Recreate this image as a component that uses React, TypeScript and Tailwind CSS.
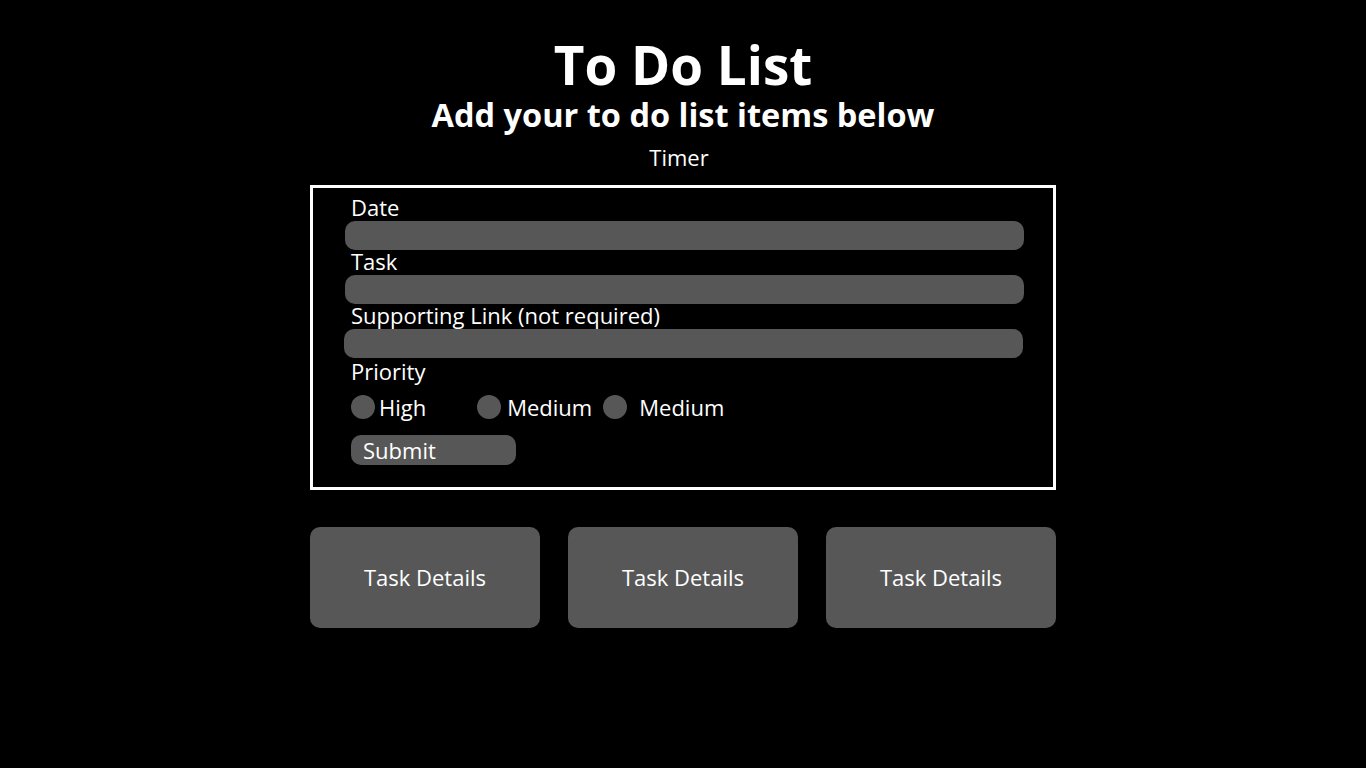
import React from 'react';

const font = { fontFamily: '"Open Sans", "Liberation Sans", sans-serif' };

function Field({ label, shift = false }: { label: string; shift?: boolean }) {
  return (
    <div className="flex flex-col">
      <label className="ml-[38px] h-[22px] text-[22px] leading-[22px] text-white">{label}</label>
      <div className={`${shift ? 'ml-[31px]' : 'ml-[32px]'} mt-[3px] h-[29px] w-[679px] rounded-[10px] bg-[#575757]`} />
    </div>
  );
}

function Radio({ label, gap }: { label: string; gap: string }) {
  return (
    <div className="flex items-center">
      <span className="h-[24px] w-[24px] rounded-full bg-[#575757]" />
      <span className={`${gap} text-[22px] leading-[24px] text-white`}>{label}</span>
    </div>
  );
}

export default function App() {
  return (
    <div className="min-h-screen w-full bg-black flex flex-col items-center" style={font}>
      <h1 className="mt-[33px] text-[53px] leading-[64px] font-bold text-white">To Do List</h1>
      <h2 className="text-[32.5px] leading-[36px] font-bold text-white">Add your to do list items below</h2>
      <div className="mt-[11px] text-[22px] leading-[26px] text-white -ml-[8px]">Timer</div>

      <div className="mt-[15px] w-[746px] h-[305px] border-[3px] border-white flex flex-col pt-[8px]">
        <Field label="Date" />
        <Field label="Task" />
        <Field label="Supporting Link (not required)" shift />
        <div className="ml-[38px] mt-[1px] h-[24px] text-[22px] leading-[24px] text-white">Priority</div>
        <div className="ml-[38px] mt-[12px] flex items-center">
          <Radio label="High" gap="ml-[4px]" />
          <div className="ml-[51px]"><Radio label="Medium" gap="ml-[6px]" /></div>
          <div className="ml-[11px]"><Radio label="Medium" gap="ml-[12px]" /></div>
        </div>
        <button className="ml-[38px] mt-[16px] h-[30px] w-[165px] rounded-[10px] bg-[#575757] text-left pl-[12px] text-[22px] leading-[30px] text-white">
          Submit
        </button>
      </div>

      <div className="mt-[37px] flex gap-[28px]">
        {[0, 1, 2].map((i) => (
          <div key={i} className="h-[101px] w-[230px] rounded-[10px] bg-[#575757] flex items-center justify-center text-[22px] text-white">
            Task Details
          </div>
        ))}
      </div>
    </div>
  );
}
